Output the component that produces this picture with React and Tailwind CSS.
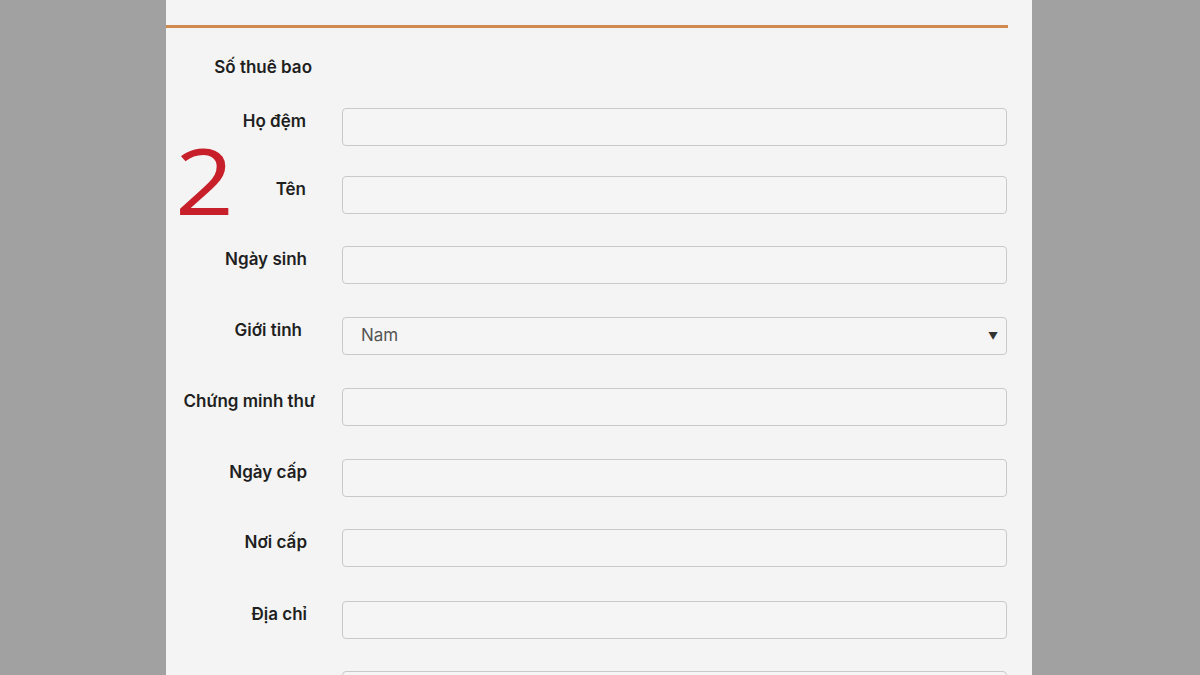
const rows = [
  { label: 'Họ đệm', h: 'h-[68px]', pr: 'pr-[1px]' },
  { label: 'Tên', h: 'h-[70px]', pr: 'pr-[1px]' },
  { label: 'Ngày sinh', h: 'h-[71px]', pr: 'pr-0' },
  { label: 'Giới tinh', select: 'Nam', h: 'h-[71px]', pr: 'pr-[5px]' },
  { label: 'Chứng minh thư', h: 'h-[71px]', pr: 'pr-0 translate-x-[8px]' },
  { label: 'Ngày cấp', h: 'h-[70px]', pr: 'pr-0' },
  { label: 'Nơi cấp', h: 'h-[72px]', pr: 'pr-0' },
  { label: 'Địa chỉ', h: 'h-[70px]', pr: 'pr-0' },
  { label: '', h: 'h-[70px]', pr: 'pr-0' },
];

function FieldRow({ label, select, h, pr }) {
  return (
    <div className={`flex items-start ${h}`}>
      <div className={`w-[141px] shrink-0 pt-[1px] text-right text-[17px] leading-[24px] font-semibold text-[#1f1f1f] whitespace-nowrap ${pr}`}>
        {label}
      </div>
      <div className="ml-[35px] w-[665px] shrink-0 h-[38px] rounded-[4px] border-[1.5px] border-[#c9c9c9] bg-[#f5f5f5] flex items-center">
        {select ? (
          <>
            <span className="pl-[18px] text-[17px] text-[#555555] flex-1">{select}</span>
            <span className="pr-[8px] text-[10px] text-[#333333]">▼</span>
          </>
        ) : null}
      </div>
    </div>
  );
}

export default function App() {
  return (
    <div
      className="w-[1200px] h-[675px] bg-[#a1a1a1] overflow-hidden"
      style={{ fontFamily: 'Inter, "Noto Sans", sans-serif' }}
    >
      <div className="relative ml-[166px] w-[866px] h-full bg-[#f4f4f4]">
        <div className="h-[25px]" />
        <div className="w-[842px] h-[2.5px] bg-[#d08a50]" />
        <div className="h-[27.5px]" />
        <div className="h-[53px] flex items-start">
          <div className="w-[146px] text-right text-[17px] leading-[24px] font-semibold text-[#1f1f1f]">
            Số thuê bao
          </div>
        </div>
        {rows.map((r, i) => (
          <FieldRow key={i} label={r.label} select={r.select} h={r.h} pr={r.pr} />
        ))}
        <div
          className="absolute left-[9px] top-[134px] text-[92px] leading-none text-[#c8202a] origin-left scale-x-[1.12]"
          style={{ fontFamily: '"Open Sans", sans-serif' }}
        >
          2
        </div>
      </div>
    </div>
  );
}
